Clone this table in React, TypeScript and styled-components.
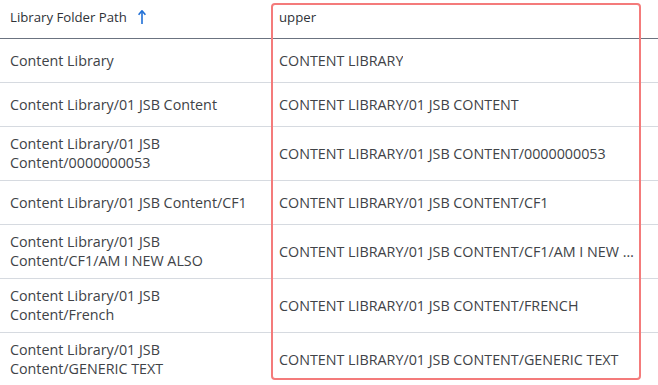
import styled, { createGlobalStyle } from 'styled-components';

const GlobalStyle = createGlobalStyle`
    html, body {
        margin: 0;
        padding: 0;
        background: #fff;
        font-family: "Open Sans", "Noto Sans", sans-serif;
        overflow: hidden;
    }
`

const Tabela = styled.div`
    position: relative;
    width: 658px;
    color: #404347;
`

const Linha = styled.div<{ $cabecalho?: boolean }>`
    display: grid;
    grid-template-columns: 272px 368px 1fr;
    min-height: ${p => (p.$cabecalho ? '38px' : '43px')};
    border-bottom: 1px solid ${p => (p.$cabecalho ? '#6b7380' : '#d6dae0')};
`

const Celula = styled.div<{ $recortar?: boolean }>`
    display: flex;
    align-items: center;
    padding: 7px 10px 8px;
    font-size: 14.3px;
    line-height: 19px;
    min-width: 0;
    ${p => p.$recortar && `
        padding: 7px 6px 8px 7px;
        span {
            white-space: nowrap;
            overflow: hidden;
            text-overflow: ellipsis;
        }
    `}
`

const CelulaCabecalho = styled.div<{ $filtro?: boolean }>`
    display: flex;
    align-items: center;
    gap: 10px;
    padding: ${p => (p.$filtro ? '0 7px 4px' : '0 10px 4px')};
    font-size: 13.2px;
    font-weight: 500;
    color: #2f3237;
`

const SetaOrdem = styled.svg`
    width: 10px;
    height: 16px;
    flex-shrink: 0;
`

const Destaque = styled.div`
    position: absolute;
    left: 271px;
    top: 3px;
    width: 366px;
    height: 373px;
    border: 2px solid #f47b7b;
    border-radius: 4px;
    pointer-events: none;
`

const pastas = [
    'Content Library',
    'Content Library/01 JSB Content',
    'Content Library/01 JSB Content/0000000053',
    'Content Library/01 JSB Content/CF1',
    'Content Library/01 JSB Content/CF1/AM I NEW ALSO',
    'Content Library/01 JSB Content/French',
    'Content Library/01 JSB Content/GENERIC TEXT',
]

export default function App() {
    return (
        <>
            <GlobalStyle />
            <Tabela>
                <Linha $cabecalho>
                    <CelulaCabecalho>
                        Library Folder Path
                        <SetaOrdem viewBox="0 0 10 16">
                            <path d="M5 15V2.5" stroke="#1f6fd6" strokeWidth="1.6" fill="none" />
                            <path d="M1.6 5.8L5 1.8l3.4 4" stroke="#1f6fd6" strokeWidth="1.6" fill="none" strokeLinejoin="round" />
                        </SetaOrdem>
                    </CelulaCabecalho>
                    <CelulaCabecalho $filtro>upper</CelulaCabecalho>
                    <div />
                </Linha>

                {pastas.map(pasta => (
                    <Linha key={pasta}>
                        <Celula>{pasta}</Celula>
                        <Celula $recortar><span>{pasta.toUpperCase()}</span></Celula>
                        <div />
                    </Linha>
                ))}

                <Destaque />
            </Tabela>
        </>
    );
}
